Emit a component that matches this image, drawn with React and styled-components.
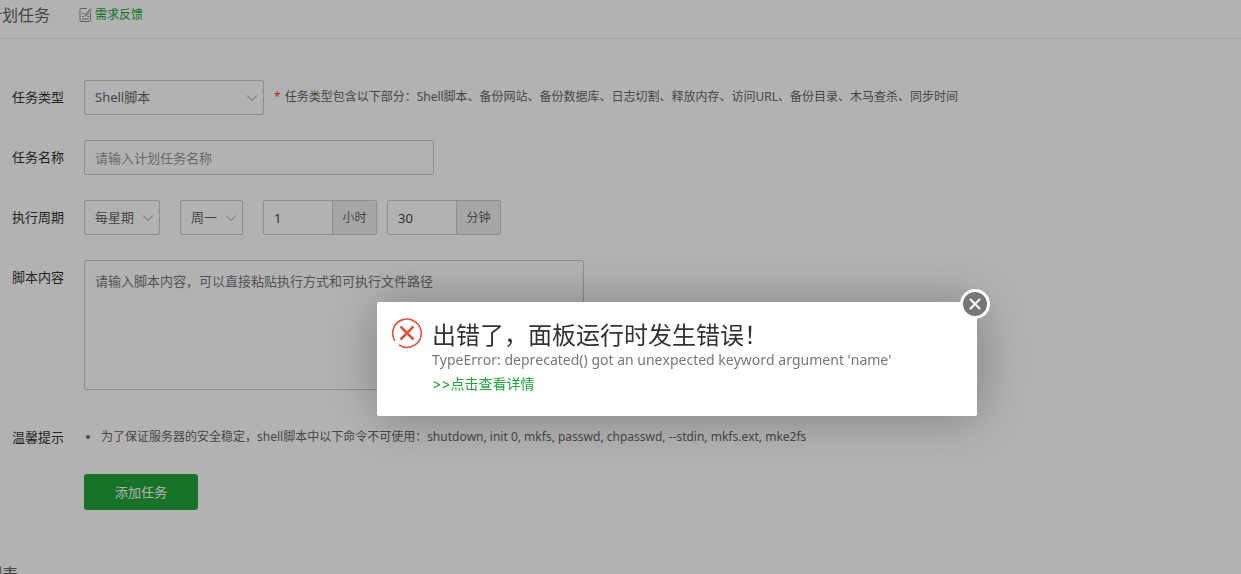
import React from 'react'
import styled, {createGlobalStyle} from 'styled-components'

// ====================== STYLED COMPONENTS ======================
const GlobalStyle = createGlobalStyle`
  * {
    box-sizing: border-box;
  }
  html {
    overflow: hidden;
  }
  body {
    margin: 0;
    background: #fff;
    color: #666;
    font-family: 'Noto Sans', 'Noto Sans CJK SC', sans-serif;
    font-size: 12px;
    font-kerning: none;
    line-height: 24px;
  }
  button, input, select, textarea {
    font-family: inherit;
  }
`

const Page = styled.main`
  margin-left: -14px;
`

const Header = styled.header`
  display: flex;
  align-items: center;
  gap: 29px;
  height: 39px;
  padding-bottom: 9px;
  border-bottom: 1px solid #ececec;
`

const Title = styled.h1`
  margin: 0;
  font-size: 16px;
  font-weight: normal;
  line-height: 24px;
`

const Feedback = styled.a`
  display: flex;
  align-items: center;
  gap: 3px;
  color: #20a53a;
  text-decoration: none;
`

const Form = styled.form`
  padding: 41px 26px 0;
`

const Row = styled.div`
  display: flex;
  align-items: flex-start;
  margin-bottom: 25px;
  padding-top: ${(p) => (p.$tip ? 10 : 0)}px;
`

const Label = styled.label`
  flex: none;
  width: 72px;
  color: #333;
  font-size: 13px;
  line-height: ${(p) => (p.$tip ? 24 : 35)}px;
`

const SelectBox = styled.div`
  position: relative;
  width: ${(p) => p.$width}px;
  margin-right: ${(p) => p.$gap}px;

  select {
    display: block;
    width: 100%;
    height: 35px;
    padding: 0 10px 2px;
    border: 1px solid #ccc;
    border-radius: 2px;
    background: #fff;
    color: #666;
    font-size: 13px;
    appearance: none;
  }

  svg {
    position: absolute;
    top: 14px;
    right: 6px;
    pointer-events: none;
  }
`

const Hint = styled.p`
  margin: 0;
  line-height: 34px;
`

const Star = styled.span`
  margin-right: 4px;
  color: #f33;
`

const NameInput = styled.input`
  width: 350px;
  height: 35px;
  padding: 0 10px;
  border: 1px solid #ccc;
  border-radius: 2px;
  font-size: 13px;

  &::placeholder {
    color: #999;
  }
`

const TimeGroup = styled.label`
  display: flex;
  height: 35px;
  margin-right: 10px;
  border: 1px solid #ccc;
  border-radius: 2px;
  line-height: 33px;

  input {
    width: 68px;
    padding: 0 10px;
    border: 0;
    color: #444;
    font-size: 13px;
  }

  span {
    width: 44px;
    border-left: 1px solid #ccc;
    background: #eee;
    text-align: center;
  }
`

const Script = styled.textarea`
  display: block;
  width: 500px;
  height: 130px;
  padding: 8px 10px;
  border: 1px solid #ccc;
  border-radius: 2px;
  font-size: 13px;
  line-height: 24px;
  resize: none;

  &::placeholder {
    color: #777;
  }
`

const Tips = styled.ul`
  margin: 0;
  padding-left: 17px;
`

const Submit = styled.button`
  width: 114px;
  height: 36px;
  margin-left: 72px;
  padding-bottom: 3px;
  border: 0;
  border-radius: 3px;
  background: #20a53a;
  color: #fff;
  font-size: 13px;
`

const ListTitle = styled.h2`
  margin: 52px 0 0;
  font-size: 16px;
  font-weight: normal;
  line-height: 24px;
`

const Mask = styled.div`
  position: fixed;
  inset: 0;
  display: flex;
  align-items: center;
  justify-content: center;
  padding: 144px 0 0 113px;
  background: rgba(0, 0, 0, 0.3);
`

const Dialog = styled.section`
  position: relative;
  display: flex;
  gap: 9px;
  width: 600px;
  padding: 15px 14px 20px;
  border-radius: 2px;
  background: #fff;
  box-shadow: 1px 1px 50px rgba(0, 0, 0, 0.3);
  font-size: 14px;

  & > svg {
    flex: none;
  }
`

const DialogTitle = styled.h3`
  margin: 0;
  padding: 6px 0 1px;
  color: #333;
  font-size: 24px;
  font-weight: normal;
  line-height: 24px;
`

const Message = styled.p`
  margin: 0;
  color: #777;
`

const Detail = styled.a`
  display: block;
  color: #20a53a;
  text-decoration: none;
`

const Arrows = styled.span`
  font-family: Inter, sans-serif;
  font-variant-ligatures: none;
`

const Close = styled.button`
  position: absolute;
  top: -13px;
  right: -13px;
  display: flex;
  align-items: center;
  justify-content: center;
  width: 30px;
  height: 30px;
  padding: 0;
  border: 3px solid #fff;
  border-radius: 50%;
  background: #777;
`
// ===============================================================

const Select = ({id, label, value, width, gap}) => (
  <SelectBox $width={width} $gap={gap}>
    <select id={id} aria-label={label} defaultValue={value}>
      <option>{value}</option>
    </select>
    <svg width="12" height="8" viewBox="0 0 12 8" fill="none" stroke="#999">
      <path d="M1 1.5l5 5 5-5" />
    </svg>
  </SelectBox>
)

const NoteIcon = () => (
  <svg width="13" height="16" viewBox="0 0 13 16" fill="none" stroke="#888">
    <path d="M8 1.500H2q-1 0-1 1v11q0 1 1 1h8.500q1 0 1-1V6" />
    <path d="M11.500 1.500L7 7l-1 2 2-1 4.500-5.500M3 6.500h2.500M3 9.500h2M8.500 9.500h1.500M3 12h7" />
  </svg>
)

const ErrorIcon = () => (
  <svg width="32" height="32" viewBox="0 0 32 32" fill="none" stroke="#dd5145">
    <path
      d="M3.800 23.800A14.300 14.300 0 1 1 30.300 16A14.300 14.300 0 0 1 8 27.900"
      strokeWidth="1.600"
    />
    <path d="M9.500 9.500l13 13M22.500 9.500l-13 13" strokeWidth="2.600" />
  </svg>
)

const App = () => (
  <>
    <GlobalStyle />
    <Page>
      <Header>
        <Title>计划任务</Title>
        <Feedback href="#feedback">
          <NoteIcon />
          需求反馈
        </Feedback>
      </Header>
      <Form onSubmit={(e) => e.preventDefault()}>
        <Row>
          <Label htmlFor="type">任务类型</Label>
          <Select id="type" value="Shell脚本" width={180} gap={10} />
          <Hint>
            <Star>*</Star>
            任务类型包含以下部分：Shell脚本、备份网站、备份数据库、日志切割、释放内存、访问URL、备份目录、木马查杀、同步时间
          </Hint>
        </Row>
        <Row>
          <Label htmlFor="name">任务名称</Label>
          <NameInput id="name" placeholder="请输入计划任务名称" />
        </Row>
        <Row>
          <Label htmlFor="cycle">执行周期</Label>
          <Select id="cycle" value="每星期" width={76} gap={20} />
          <Select id="week" label="星期" value="周一" width={63} gap={20} />
          <TimeGroup>
            <input defaultValue="1" />
            <span>小时</span>
          </TimeGroup>
          <TimeGroup>
            <input defaultValue="30" />
            <span>分钟</span>
          </TimeGroup>
        </Row>
        <Row>
          <Label htmlFor="script">脚本内容</Label>
          <Script
            id="script"
            placeholder="请输入脚本内容，可以直接粘贴执行方式和可执行文件路径"
          />
        </Row>
        <Row $tip>
          <Label as="span" $tip>
            温馨提示
          </Label>
          <Tips>
            <li>
              为了保证服务器的安全稳定，shell脚本中以下命令不可使用：shutdown,
              init 0, mkfs, passwd, chpasswd, --stdin, mkfs.ext, mke2fs
            </li>
          </Tips>
        </Row>
        <Submit type="submit">添加任务</Submit>
      </Form>
      <ListTitle>列表</ListTitle>
    </Page>
    <Mask>
      <Dialog role="dialog" aria-labelledby="error-title">
        <ErrorIcon />
        <div>
          <DialogTitle id="error-title">
            出错了，面板运行时发生错误！
          </DialogTitle>
          <Message>
            TypeError: deprecated() got an unexpected keyword argument 'name'
          </Message>
          <Detail href="#detail">
            <Arrows>&gt;&gt;</Arrows>点击查看详情
          </Detail>
        </div>
        <Close type="button" aria-label="关闭">
          <svg width="12" height="12" viewBox="0 0 12 12" stroke="#fff">
            <path
              d="M1.500 1.500l9 9M10.500 1.500l-9 9"
              strokeWidth="2"
              strokeLinecap="round"
            />
          </svg>
        </Close>
      </Dialog>
    </Mask>
  </>
)

export default App
